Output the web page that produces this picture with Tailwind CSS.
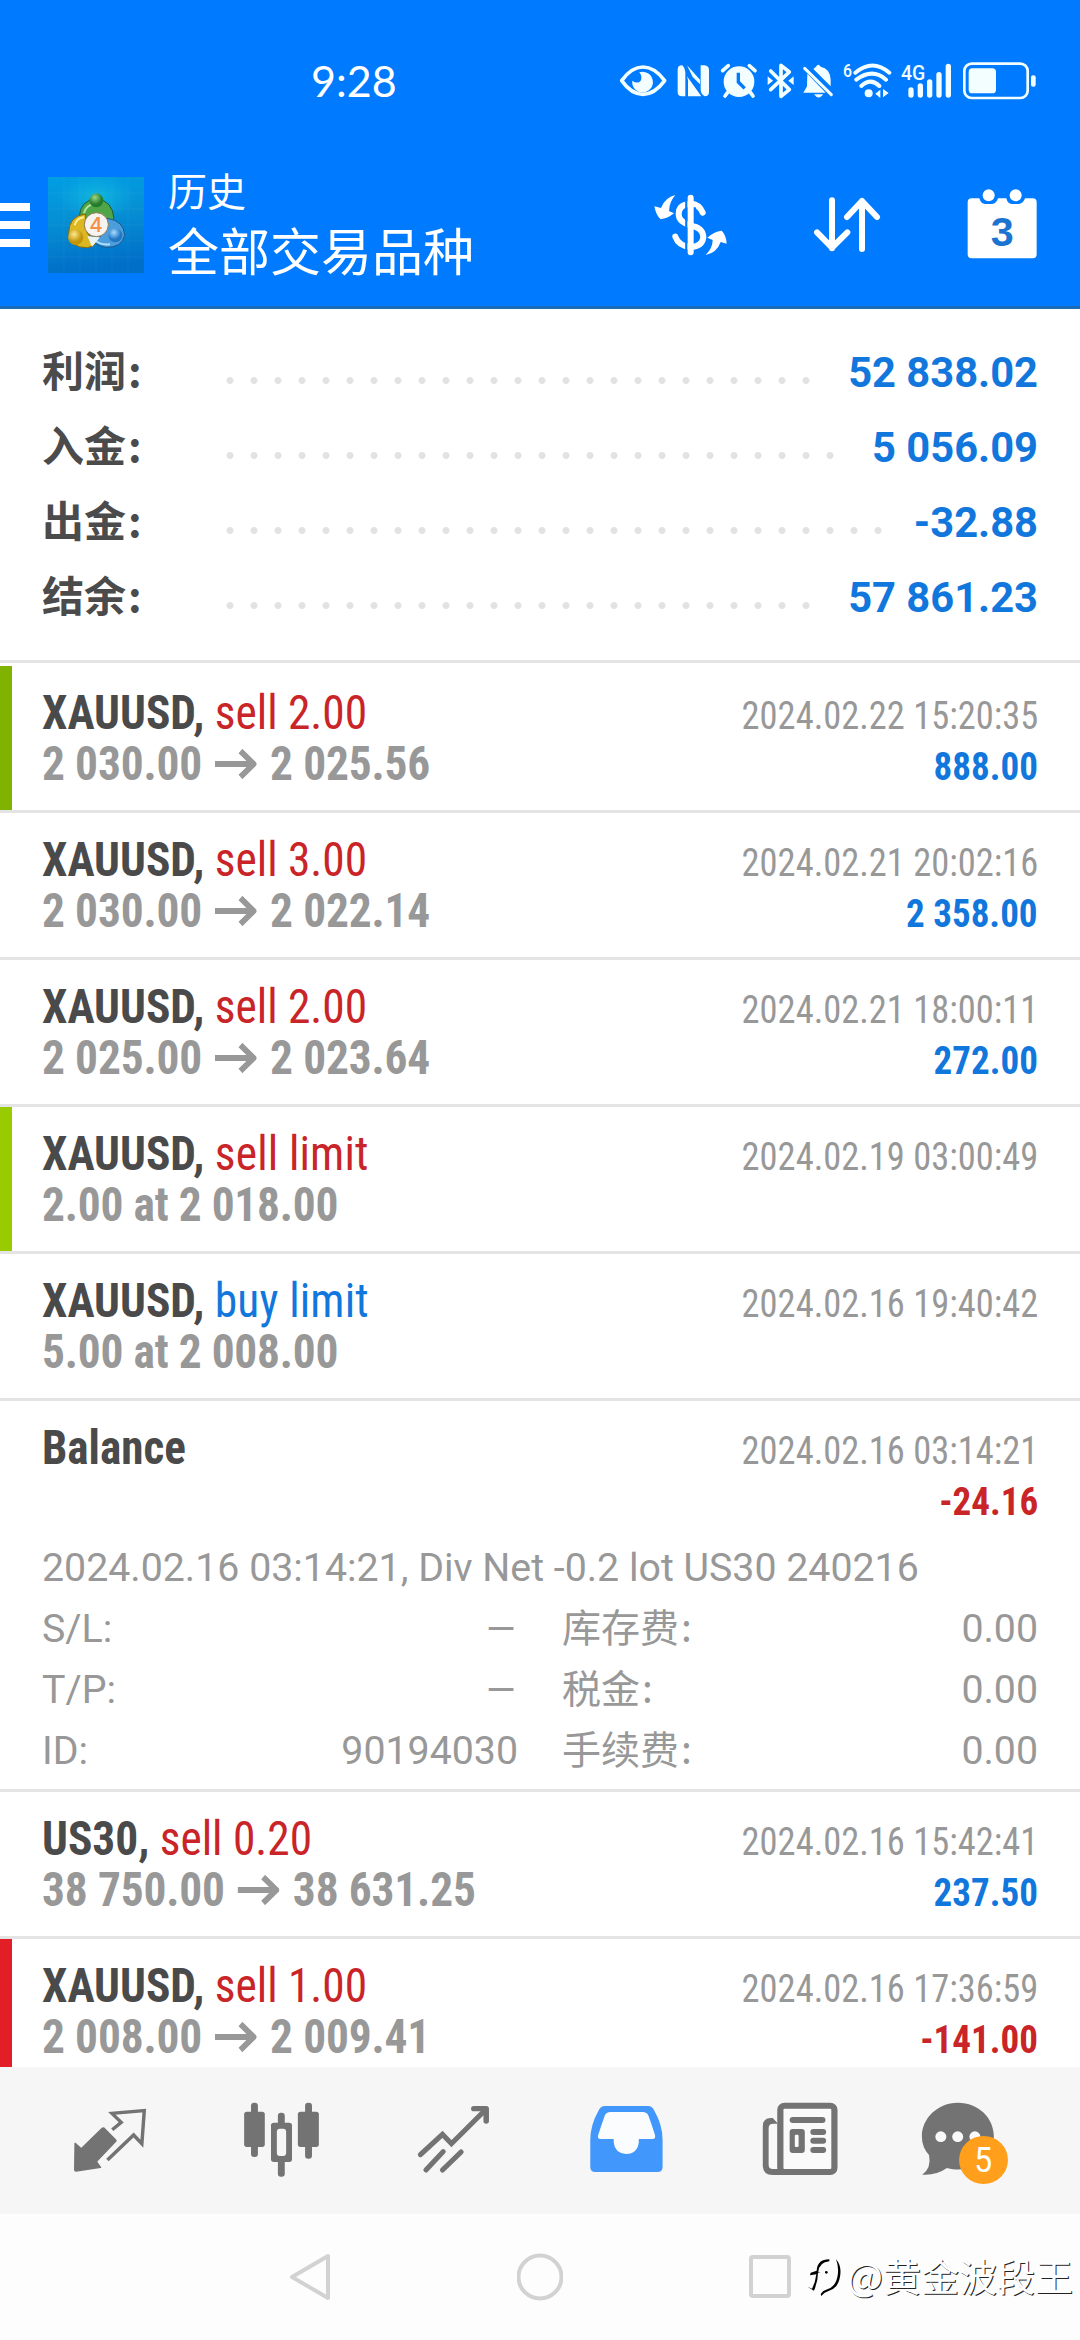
<!DOCTYPE html>
<html lang="zh-CN">
<head>
<meta charset="utf-8">
<title>历史</title>
<script src="https://cdn.jsdelivr.net/npm/@tailwindcss/browser@4"></script>
</head>
<body class="w-[1080px] h-[2340px] overflow-hidden bg-white flex flex-col font-['Roboto','Noto_Sans_CJK_SC',sans-serif]">

<!-- Header -->
<header class="shrink-0 h-[309px] bg-[#007aff] border-b-3 border-[#1a6cb8] text-white flex flex-col">
  <div class="h-[144px] pt-[18px] flex items-center justify-between pl-[311px] pr-[40px]">
    <span class="font-['Lato',sans-serif] text-[43px] leading-none -mt-[2px]">9:28</span>
    <svg class="w-[425px] h-[42px]" viewBox="45 59 1275 126" fill="none" stroke="#f2feff">
      <!-- eye -->
      <path d="M65 121 Q94 80 129 80 Q164 80 194 121 Q164 162 129 162 Q94 162 65 121 Z" stroke-width="11" stroke-linejoin="round"/>
      <path d="M118 96 A31 31 0 1 1 97 121 Q112 132 122 121 Q128 110 118 96 Z" fill="#f2feff" stroke="none"/>
      <!-- nfc -->
      <g fill="#f2feff" stroke="none"><path d="M251 75 H246 Q233 75 233 88 V155 Q233 168 246 168 H256 V95 Q256 84 247 75 Z M261 75 L300 118 V132 L278 110 Z M313 75 Q327 77 327 88 V155 Q327 168 314 168 Q302 160 302 148 V75 Z M261 108 L304 168 H264 V120 Z"/></g>
      <!-- alarm -->
      <circle cx="417" cy="124" r="46" fill="#f2feff" stroke="none"/>
      <path d="M368 91 L385 76 M465 91 L448 76 M383 156 L375 167 M451 156 L459 167" stroke-width="11" stroke-linecap="round"/>
      <path d="M415 97 V125 L434 144" stroke="#007aff" stroke-width="10"/>
      <!-- bluetooth -->
      <path d="M512 92 L568 148 L543 168 V75 L568 95 L512 148" stroke-width="11" stroke-linejoin="round" stroke-linecap="round"/>
      <path d="M505 112 L516 121 L505 130 Z M579 112 L568 121 L579 130 Z" fill="#f2feff" stroke-width="4"/>
      <!-- muted bell -->
      <path d="M640 86 L692 138 V118 Q690 84 662 79 Q655 68 648 79 Z M622 100 L677 157 H610 L621 138 Z M642 162 H670 Q656 181 642 162 Z" fill="#f2feff" stroke="none"/>
      <path d="M614 84 L694 163" stroke-width="9" stroke-linecap="round"/>
      <!-- wifi -->
      <text x="729" y="109" font-family="Roboto" font-size="56" font-weight="500" fill="#f2feff" stroke="none" textLength="27" lengthAdjust="spacingAndGlyphs">6</text>
      <path d="M766 97 Q818 54 868 97 M769 118 Q818 82 858 118 M784 137 Q812 111 838 137" stroke-width="12" stroke-linecap="round"/>
      <circle cx="806" cy="159" r="12" fill="#f2feff" stroke="none"/>
      <path d="M841 148 V173 L826 160 Z M849 146 V171 L866 158 Z" fill="#f2feff" stroke="none"/>
      <!-- signal -->
      <text x="903" y="119" font-family="Roboto" font-size="62" font-weight="500" fill="#f2feff" stroke="none" textLength="73" lengthAdjust="spacingAndGlyphs">4G</text>
      <path d="M933 149 V164 M961 137 V164 M989 125 V164 M1017 103 V164 M1045 78 V164" stroke-width="16" stroke-linecap="round"/>
      <!-- battery -->
      <rect x="1093" y="70" width="190" height="103" rx="22" stroke-width="8"/>
      <rect x="1106" y="84" width="82" height="75" rx="11" fill="#f2feff" stroke="none"/>
      <rect x="1293" y="105" width="14" height="34" rx="6" fill="#f2feff" stroke="none"/>
    </svg>
  </div>

  <div class="h-[162px] flex items-center">
    <div class="w-[30px] flex flex-col gap-[10px]">
      <i class="h-2 bg-white"></i><i class="h-2 bg-white"></i><i class="h-2 bg-white"></i>
    </div>
    <svg class="ml-[18px] w-24 h-24" viewBox="144 81 288 288">
      <defs>
        <linearGradient id="bg" x1="0" y1="0" x2="0.15" y2="1"><stop offset="0" stop-color="#009ee4"/><stop offset=".45" stop-color="#0690d4"/><stop offset="1" stop-color="#006fc8"/></linearGradient>
        <radialGradient id="glow"><stop offset="0" stop-color="#12c0dc" stop-opacity=".8"/><stop offset="1" stop-color="#12b5e5" stop-opacity="0"/></radialGradient>
        <radialGradient id="gr" cx=".4" cy=".3"><stop offset="0" stop-color="#9fd488"/><stop offset="1" stop-color="#237c2c"/></radialGradient>
        <radialGradient id="ye" cx=".4" cy=".3"><stop offset="0" stop-color="#ffe98c"/><stop offset="1" stop-color="#c29408"/></radialGradient>
        <radialGradient id="bl" cx=".4" cy=".3"><stop offset="0" stop-color="#a8dcff"/><stop offset="1" stop-color="#2276c4"/></radialGradient>
      </defs>
      <rect x="144" y="81" width="288" height="288" fill="url(#bg)"/>
      <ellipse cx="288" cy="140" rx="120" ry="70" fill="url(#glow)"/>
      <path d="M192 81V369M240 81V369M288 81V369M336 81V369M384 81V369M144 129H432M144 177H432M144 225H432M144 273H432M144 321H432" stroke="#fff" stroke-opacity=".07" stroke-width="2"/>
      <path d="M238 200 Q240 152 289 146 Q338 152 342 206 L318 222 L290 190 L262 206 Z" fill="#4fa548" stroke="#1d5c33" stroke-width="3"/>
      <path d="M252 190 Q258 164 284 162" stroke="#b5e2a0" stroke-width="6" fill="none"/>
      <path d="M256 192 Q206 198 206 250 Q210 294 262 293 Q280 290 288 280 L262 250 Z" fill="#dcb722" stroke="#85680c" stroke-width="3"/>
      <path d="M224 226 Q230 204 252 202" stroke="#ffef9c" stroke-width="6" fill="none"/>
      <path d="M322 205 Q372 212 374 256 Q366 294 316 292 Q282 286 268 258 L300 262 Z" fill="#4b9ddc" stroke="#1a568c" stroke-width="3"/>
      <path d="M282 268 Q300 286 330 283" stroke="#b4e0ff" stroke-width="6" fill="none"/>
      <path d="M262 258 L276 290 L300 262 Z M300 186 L322 206 L308 192 Z" fill="#eaf3f6"/>
      <circle cx="289" cy="151" r="21" fill="url(#gr)"/>
      <circle cx="227" cy="262" r="23" fill="url(#ye)"/>
      <circle cx="346" cy="256" r="21" fill="url(#bl)"/>
      <circle cx="289" cy="224" r="36" fill="#f7f3f0" stroke="#8f7a4d" stroke-width="3"/>
      <text x="288" y="246" text-anchor="middle" font-family="Inter" font-size="62" font-weight="500" fill="#f29146">4</text>
    </svg>
    <div class="ml-[24px] pb-[7px] w-[400px] whitespace-nowrap font-['Noto_Sans_CJK_SC',sans-serif]">
      <div class="text-[39px] h-[54px] leading-[54px]">历史</div>
      <div class="text-[51px] h-[65px] leading-[67px]">全部交易品种</div>
    </div>
    <svg class="ml-[86px] w-[74px] h-[64px]" viewBox="100 99 222 192" fill="none" stroke="#fff">
      <path d="M246 158 Q236 132 210 131 Q174 133 174 162 Q174 186 210 196 Q248 204 248 232 Q244 260 210 261 Q174 258 164 230" stroke-width="18" stroke-linecap="round"/>
      <path d="M197 105 V285 M222 142 V190" stroke="#007aff" stroke-width="7"/>
      <path d="M210 113 V277" stroke-width="18" stroke-linecap="round"/>
      <path d="M164 105 Q133 112 121 144 L101 139 Q106 166 120 178 Q140 176 160 160 L145 153 Q146 125 164 105 Z M255 285 Q288 279 300 246 L318 251 Q316 224 303 212 Q279 215 260 233 L276 240 Q276 264 255 285 Z" fill="#fff" stroke="none"/>
    </svg>
    <svg class="ml-[85px] w-[70px] h-[58px]" viewBox="576 109 210 174" fill="none" stroke="#fff" stroke-width="18" stroke-linecap="round" stroke-linejoin="round">
      <path d="M633 122 V266 M588 218 L633 264 L679 218 M723 268 V124 M678 172 L723 124 L768 172"/>
    </svg>
    <svg class="ml-[82px] w-[74px] h-[70px] -mt-[3px]" viewBox="1030 86 222 210">
      <path d="M1050 114 H1073 Q1078 131 1090 131 H1112 Q1126 128 1129 114 H1154 Q1158 131 1170 131 H1192 Q1206 128 1210 114 H1233 Q1245 114 1245 126 V282 Q1245 294 1233 294 H1050 Q1038 294 1038 282 V126 Q1038 114 1050 114 Z" fill="#fff"/>
      <circle cx="1101" cy="105" r="18" fill="#fff"/><circle cx="1182" cy="105" r="18" fill="#fff"/>
      <text x="1142" y="256" text-anchor="middle" font-family="Liberation Sans" font-size="124" font-weight="700" fill="#1a74d0">3</text>
    </svg>
  </div>
</header>

<!-- Account summary -->
<section class="shrink-0 h-[351px] pt-[22px] px-[42px] text-[41.7px] font-bold leading-[75px]">
  <div class="h-[75px] flex items-baseline">
    <span class="w-[176px] text-[42px] text-[#4b4b4b] font-['Noto_Sans_CJK_SC',sans-serif]">利润<span class="ml-[2px]">:</span></span>
    <i class="self-start mt-[45px] h-[9px] w-[600px] bg-[radial-gradient(circle,#e2e2e2_3px,transparent_4px)] bg-[length:24px_9px]"></i>
    <span class="ml-auto text-[#1277dc]">52 838.02</span>
  </div>
  <div class="h-[75px] flex items-baseline">
    <span class="w-[176px] text-[42px] text-[#4b4b4b] font-['Noto_Sans_CJK_SC',sans-serif]">入金<span class="ml-[2px]">:</span></span>
    <i class="self-start mt-[45px] h-[9px] w-[624px] bg-[radial-gradient(circle,#e2e2e2_3px,transparent_4px)] bg-[length:24px_9px]"></i>
    <span class="ml-auto text-[#1277dc]">5 056.09</span>
  </div>
  <div class="h-[75px] flex items-baseline">
    <span class="w-[176px] text-[42px] text-[#4b4b4b] font-['Noto_Sans_CJK_SC',sans-serif]">出金<span class="ml-[2px]">:</span></span>
    <i class="self-start mt-[45px] h-[9px] w-[672px] bg-[radial-gradient(circle,#e2e2e2_3px,transparent_4px)] bg-[length:24px_9px]"></i>
    <span class="ml-auto text-[#1277dc]">-32.88</span>
  </div>
  <div class="h-[75px] flex items-baseline">
    <span class="w-[176px] text-[42px] text-[#4b4b4b] font-['Noto_Sans_CJK_SC',sans-serif]">结余<span class="ml-[2px]">:</span></span>
    <i class="self-start mt-[45px] h-[9px] w-[600px] bg-[radial-gradient(circle,#e2e2e2_3px,transparent_4px)] bg-[length:24px_9px]"></i>
    <span class="ml-auto text-[#1277dc]">57 861.23</span>
  </div>
</section>

<svg class="hidden"><symbol id="arrow" viewBox="0 0 44 30"><path d="M0 15H41M27 2L41 15L27 28" fill="none" stroke="#989898" stroke-width="6"/></symbol></svg>

<!-- Deals -->
<main class="h-[1407px] shrink-0 overflow-hidden border-t-3 border-[#e4e4e4] pt-[3px] whitespace-nowrap leading-[51px] font-['Roboto_Condensed','Roboto',sans-serif]">

  <article class="h-[147px] flex border-b-3 border-[#e4e4e4]">
    <i class="w-3 h-full bg-[#80b200]"></i>
    <div class="ml-[30px] pt-[21px] text-[48px] scale-x-[0.945] origin-left">
      <div class="h-[51px] text-[#c92427]"><b class="text-[#4a4a4a]">XAUUSD,</b> sell 2.00</div>
      <div class="h-[51px] flex items-center font-bold tracking-[-0.15px] text-[#989898]">2 030.00<svg class="ml-[14px] mr-[14px] w-[44px] h-[30px]"><use href="#arrow"/></svg>2 025.56</div>
    </div>
    <div class="ml-auto mr-[42px] pt-[25px] text-[39px] flex flex-col items-end">
      <div class="h-[51px] text-[#989898] scale-x-[0.935] origin-right">2024.02.22 15:20:35</div>
      <div class="h-[51px] font-bold text-[#1277dc] scale-x-[0.95] origin-right">888.00</div>
    </div>
  </article>

  <article class="h-[147px] flex border-b-3 border-[#e4e4e4]">
    <i class="w-3 h-full"></i>
    <div class="ml-[30px] pt-[21px] text-[48px] scale-x-[0.945] origin-left">
      <div class="h-[51px] text-[#c92427]"><b class="text-[#4a4a4a]">XAUUSD,</b> sell 3.00</div>
      <div class="h-[51px] flex items-center font-bold tracking-[-0.15px] text-[#989898]">2 030.00<svg class="ml-[14px] mr-[14px] w-[44px] h-[30px]"><use href="#arrow"/></svg>2 022.14</div>
    </div>
    <div class="ml-auto mr-[42px] pt-[25px] text-[39px] flex flex-col items-end">
      <div class="h-[51px] text-[#989898] scale-x-[0.935] origin-right">2024.02.21 20:02:16</div>
      <div class="h-[51px] font-bold text-[#1277dc] scale-x-[0.95] origin-right">2 358.00</div>
    </div>
  </article>

  <article class="h-[147px] flex border-b-3 border-[#e4e4e4]">
    <i class="w-3 h-full"></i>
    <div class="ml-[30px] pt-[21px] text-[48px] scale-x-[0.945] origin-left">
      <div class="h-[51px] text-[#c92427]"><b class="text-[#4a4a4a]">XAUUSD,</b> sell 2.00</div>
      <div class="h-[51px] flex items-center font-bold tracking-[-0.15px] text-[#989898]">2 025.00<svg class="ml-[14px] mr-[14px] w-[44px] h-[30px]"><use href="#arrow"/></svg>2 023.64</div>
    </div>
    <div class="ml-auto mr-[42px] pt-[25px] text-[39px] flex flex-col items-end">
      <div class="h-[51px] text-[#989898] scale-x-[0.935] origin-right">2024.02.21 18:00:11</div>
      <div class="h-[51px] font-bold text-[#1277dc] scale-x-[0.95] origin-right">272.00</div>
    </div>
  </article>

  <article class="h-[147px] flex border-b-3 border-[#e4e4e4]">
    <i class="w-3 h-full bg-[#99cc00]"></i>
    <div class="ml-[30px] pt-[21px] text-[48px] scale-x-[0.945] origin-left">
      <div class="h-[51px] text-[#c92427]"><b class="text-[#4a4a4a]">XAUUSD,</b> <span class="tracking-[0.2px]">sell limit</span></div>
      <div class="h-[51px] font-bold tracking-[-0.2px] text-[#989898]">2.00 at 2 018.00</div>
    </div>
    <div class="ml-auto mr-[42px] pt-[25px] text-[39px] flex flex-col items-end">
      <div class="h-[51px] text-[#989898] scale-x-[0.935] origin-right">2024.02.19 03:00:49</div>
    </div>
  </article>

  <article class="h-[147px] flex border-b-3 border-[#e4e4e4]">
    <i class="w-3 h-full"></i>
    <div class="ml-[30px] pt-[21px] text-[48px] scale-x-[0.945] origin-left">
      <div class="h-[51px] text-[#1277dc]"><b class="text-[#4a4a4a]">XAUUSD,</b> <span class="tracking-[0.2px]">buy limit</span></div>
      <div class="h-[51px] font-bold tracking-[-0.2px] text-[#989898]">5.00 at 2 008.00</div>
    </div>
    <div class="ml-auto mr-[42px] pt-[25px] text-[39px] flex flex-col items-end">
      <div class="h-[51px] text-[#989898] scale-x-[0.935] origin-right">2024.02.16 19:40:42</div>
    </div>
  </article>

  <article class="h-[391px] border-b-3 border-[#e4e4e4] px-[42px]">
    <div class="h-[137px] flex">
      <div class="pt-[21px] text-[48px] scale-x-[0.94] origin-left">
        <div class="h-[51px] font-bold text-[#4a4a4a]">Balance</div>
      </div>
      <div class="ml-auto pt-[25px] text-[39px] flex flex-col items-end">
        <div class="h-[51px] text-[#989898] scale-x-[0.935] origin-right">2024.02.16 03:14:21</div>
        <div class="h-[51px] font-bold text-[#c92427] scale-x-[0.95] origin-right">-24.16</div>
      </div>
    </div>
    <div class="font-['Roboto',sans-serif] text-[39.3px] leading-[61px] text-[#989898]">
      <div class="h-[61px]">2024.02.16 03:14:21, Div Net -0.2 lot US30 240216</div>
      <div class="grid grid-cols-2 gap-x-[44px]">
        <div class="h-[61px] flex justify-between"><span>S/L:</span><span class="scale-x-[1.28] origin-right">–</span></div>
        <div class="h-[61px] flex justify-between"><span class="font-['Noto_Sans_CJK_SC',sans-serif] text-[39px] leading-[53px]">库存费<span class="ml-[2px]">:</span></span><span>0.00</span></div>
        <div class="h-[61px] flex justify-between"><span>T/P:</span><span class="scale-x-[1.28] origin-right">–</span></div>
        <div class="h-[61px] flex justify-between"><span class="font-['Noto_Sans_CJK_SC',sans-serif] text-[39px] leading-[53px]">税金<span class="ml-[2px]">:</span></span><span>0.00</span></div>
        <div class="h-[61px] flex justify-between"><span>ID:</span><span>90194030</span></div>
        <div class="h-[61px] flex justify-between"><span class="font-['Noto_Sans_CJK_SC',sans-serif] text-[39px] leading-[53px]">手续费<span class="ml-[2px]">:</span></span><span>0.00</span></div>
      </div>
    </div>
  </article>

  <article class="h-[147px] flex border-b-3 border-[#e4e4e4]">
    <i class="w-3 h-full"></i>
    <div class="ml-[30px] pt-[21px] text-[48px] scale-x-[0.945] origin-left">
      <div class="h-[51px] text-[#c92427]"><b class="text-[#4a4a4a]">US30,</b> sell 0.20</div>
      <div class="h-[51px] flex items-center font-bold tracking-[-0.15px] text-[#989898]">38 750.00<svg class="ml-[14px] mr-[14px] w-[44px] h-[30px]"><use href="#arrow"/></svg>38 631.25</div>
    </div>
    <div class="ml-auto mr-[42px] pt-[25px] text-[39px] flex flex-col items-end">
      <div class="h-[51px] text-[#989898] scale-x-[0.935] origin-right">2024.02.16 15:42:41</div>
      <div class="h-[51px] font-bold text-[#1277dc] scale-x-[0.95] origin-right">237.50</div>
    </div>
  </article>

  <article class="h-[147px] flex">
    <i class="w-3 h-full bg-[#e21f26]"></i>
    <div class="ml-[30px] pt-[21px] text-[48px] scale-x-[0.945] origin-left">
      <div class="h-[51px] text-[#c92427]"><b class="text-[#4a4a4a]">XAUUSD,</b> sell 1.00</div>
      <div class="h-[51px] flex items-center font-bold tracking-[-0.15px] text-[#989898]">2 008.00<svg class="ml-[14px] mr-[14px] w-[44px] h-[30px]"><use href="#arrow"/></svg>2 009.41</div>
    </div>
    <div class="ml-auto mr-[42px] pt-[25px] text-[39px] flex flex-col items-end">
      <div class="h-[51px] text-[#989898] scale-x-[0.935] origin-right">2024.02.16 17:36:59</div>
      <div class="h-[51px] font-bold text-[#c92427] scale-x-[0.95] origin-right">-141.00</div>
    </div>
  </article>
</main>

<!-- Tab bar -->
<nav class="shrink-0 h-[147px] px-[24px] bg-[#f6f6f6] flex">
  <svg class="w-[172px] h-[147px]" preserveAspectRatio="none" viewBox="69.7 21 499.5 441" fill="none">
    <path d="M218 250 L236 266 L297 205 Q300 202 303 205 L336 240 Q338 242 336 244 L280 305 L292 322 L221 333 Q217 333 217 330 Z" fill="#737373" stroke="#737373" stroke-width="4" stroke-linejoin="round"/>
    <path d="M326 209 L352 187 L325 160 L419 152 L412 251 L388 225 L312 300" stroke="#737373" stroke-width="10"/>
  </svg>
  <svg class="w-[172px] h-[147px]" preserveAspectRatio="none" viewBox="569.2 21 499.5 441" fill="#737373">
    <rect x="709" y="155" width="60" height="106" rx="8"/><rect x="729" y="128" width="20" height="163" rx="9"/>
    <rect x="865" y="155" width="61" height="106" rx="8"/><rect x="886" y="128" width="20" height="168" rx="9"/>
    <rect x="807" y="158" width="20" height="192" rx="9"/><rect x="787" y="188" width="61" height="118" rx="8"/>
    <rect x="804" y="206" width="27" height="82" rx="9" fill="#f6f6f6"/>
  </svg>
  <svg class="w-[172px] h-[147px]" preserveAspectRatio="none" viewBox="1068.7 21 499.5 441" fill="none" stroke="#737373" stroke-width="15" stroke-linecap="round">
    <path d="M1221 284 L1285 223 L1311 251 L1410 149 M1237 330 L1287 275 M1285 330 L1339 276"/>
    <path d="M1376 146 H1412 V183" stroke-width="16" stroke-linejoin="round"/>
  </svg>
  <svg class="w-[172px] h-[147px]" preserveAspectRatio="none" viewBox="0 21 499.5 441">
    <path d="M188 138 H314 Q325 138 331 150 Q356 195 356 240 V320 Q356 336 341 336 H161 Q146 336 146 320 V240 Q146 195 171 150 Q177 138 188 138 Z" fill="#4197fb"/>
    <path d="M205 156 H298 Q311 156 315 167 Q325 195 334 225 Q336 237 328 237 H287 V247 Q283 282 250 282 Q217 280 214 247 V237 H174 Q166 236 169 225 Q178 195 188 167 Q192 156 205 156 Z" fill="#fafcfd"/>
  </svg>
  <svg class="w-[172px] h-[147px]" preserveAspectRatio="none" viewBox="499.5 21 499.5 441">
    <path d="M676 174 H670 Q647 175 647 198 V318 Q648 345 676 345 H720 V327 H690 V190 Z" fill="#737373"/>
    <path d="M678 191 H690 V327 H676 Q664 327 664 315 V204 Q664 191 678 191 Z" fill="#fafafa"/>
    <rect x="698" y="137" width="157" height="199" rx="12" fill="#fafafa" stroke="#737373" stroke-width="18"/>
    <rect x="725" y="171" width="104" height="18" rx="9" fill="#737373"/>
    <rect x="725" y="207" width="44" height="72" rx="9" fill="#737373"/><rect x="740" y="224" width="11" height="37" rx="3" fill="#fafafa"/>
    <rect x="785" y="207" width="46" height="18" rx="9" fill="#737373"/><rect x="785" y="233" width="46" height="18" rx="9" fill="#737373"/><rect x="785" y="261" width="46" height="18" rx="9" fill="#737373"/>
  </svg>
  <svg class="w-[172px] h-[147px]" preserveAspectRatio="none" viewBox="999 21 499.5 441">
    <path d="M1213 128 C1275 128 1318 175 1318 229 C1318 290 1260 345 1182 324 Q1150 347 1110 344 Q1137 325 1130 286 Q1109 262 1109 229 C1109 175 1155 128 1213 128 Z" fill="#737373"/>
    <circle cx="1164" cy="230" r="16" fill="#fafafa"/><circle cx="1213" cy="230" r="16" fill="#fafafa"/><circle cx="1263" cy="230" r="16" fill="#fafafa"/>
    <ellipse cx="1288" cy="300" rx="71" ry="72" fill="#ff9f1c"/>
    <text x="1261" y="335" font-family="Roboto" font-size="104" fill="#fff" textLength="52" lengthAdjust="spacingAndGlyphs">5</text>
  </svg>
</nav>

<!-- System navigation -->
<footer class="relative shrink-0 h-[126px] bg-[#fdfdfd] flex items-center justify-center gap-[184px]">
  <svg class="w-[46px] h-[50px]" viewBox="0 0 46 50" fill="none" stroke="#d2d2d2" stroke-width="4" stroke-linejoin="round"><path d="M41 4V46L5 25Z"/></svg>
  <svg class="w-[46px] h-[50px]" viewBox="0 0 46 50" fill="none" stroke="#d2d2d2" stroke-width="4"><circle cx="23" cy="25" r="21.5"/></svg>
  <svg class="w-[46px] h-[50px]" viewBox="0 0 46 50" fill="none" stroke="#d2d2d2" stroke-width="4"><rect x="4" y="5" width="38" height="39" rx="2"/></svg>
  <div class="absolute left-[806px] top-[35px] flex items-center text-white">
    <svg class="mt-[3px] w-[38px] h-[42px]" viewBox="48 70 114 126">
      <path d="M118 80 Q82 80 80 114 L62 120 L60 128 L79 125 Q76 150 66 168 L52 162 L72 174 Q84 146 84 120 L92 118 H85 Q88 88 118 86 Z"/>
      <path d="M138 80 Q156 100 150 132 Q144 168 114 176 Q102 180 94 190 L92 184 Q98 174 112 170 Q136 162 142 134 Q148 104 138 80 Z"/>
      <circle cx="109" cy="119" r="4"/>
    </svg>
    <span class="ml-[3px] text-[38px] leading-[52px] font-['Noto_Sans_CJK_SC',sans-serif] whitespace-nowrap [text-shadow:1px_1px_0_#222]">@黄金波段王</span>
  </div>
</footer>
</body>
</html>
